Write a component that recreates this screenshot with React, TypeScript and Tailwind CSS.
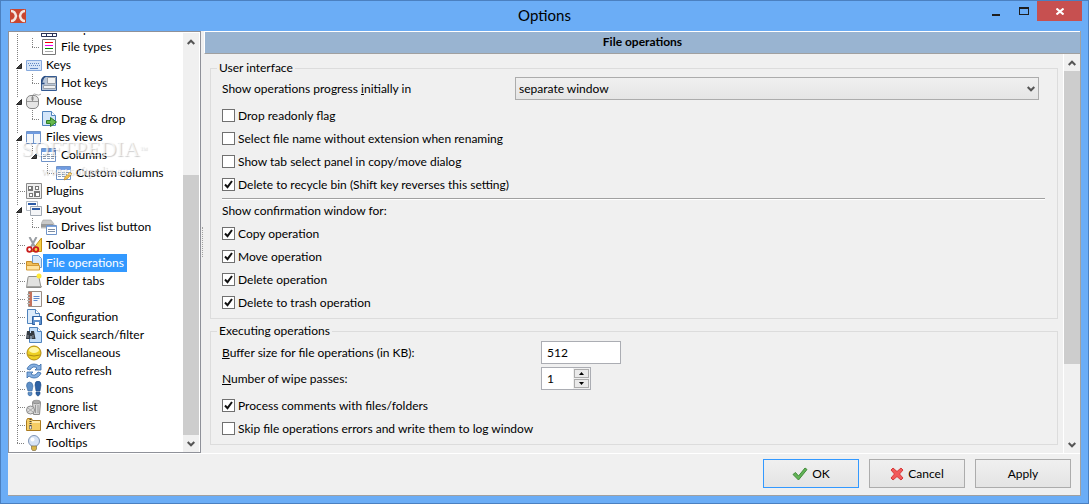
import React from 'react';

type TreeNode = {
  label: string;
  level: number;
  icon: React.ReactNode;
  open?: boolean;
  selected?: boolean;
};

const table = (
  <>
    <path d="M.5 1.5h14v13H.5z" fill="#fff" stroke="#6f93c8" />
    <path d="M1 2h13v3H1z" fill="#6f9be0" />
    <path d="M2 7.5h3M6 7.5h3M10 7.5h3M2 9.5h3M6 9.5h3M10 9.5h3M2 11.5h3M6 11.5h3M10 11.5h3" stroke="#8c9db5" />
  </>
);

const TREE: TreeNode[] = [
  {
    label: 'File panel', level: 1,
    icon: <><path d="M.5 3.5h15v12H.5z" fill="#fff" stroke="#2b3357" /><path d="M1 12.5h14M5.5 12v3M11.5 12v3" stroke="#2b3357" /></>,
  },
  {
    label: 'File types', level: 1,
    icon: <><path d="M1.5.5h13v15h-13z" fill="#fff" stroke="#777" /><path d="M4 3.5h8" stroke="#e00" /><path d="M4 6.5h8" stroke="#e0e" /><path d="M4 9.5h8" stroke="#080" /><path d="M4 12.5h8" stroke="#aaa" /></>,
  },
  {
    label: 'Keys', level: 0, open: true,
    icon: <><path d="M.5 3.5h15v10H.5z" fill="#d6e5f8" stroke="#86a9dc" /><path d="M2 6.5h12M3 8.5h11" stroke="#6088c4" strokeDasharray="1 1" /><path d="M4 11.5h8" stroke="#6088c4" /></>,
  },
  {
    label: 'Hot keys', level: 1,
    icon: <><path d="M3.5 1.5h12v14H.5V8z" fill="#b9c6d8" stroke="#345a92" /><path d="M6.5 2.5h8v6h-8z" fill="#f1f2f3" stroke="#9aa1aa" /><path d="M2.5 10.5h12v3h-12z" fill="#f1f2f3" stroke="#9aa1aa" /><path d="M.5 7q.5-5 4-5.5M.5 4.5v4h3" stroke="#294b80" strokeWidth="1.5" /></>,
  },
  {
    label: 'Mouse', level: 0, open: true,
    icon: <><path d="M7 3Q7 0 10 1.500T15 1" stroke="#aaa" /><rect x=".5" y="2.5" width="12" height="13" rx="4.5" fill="#e5e5e5" stroke="#868686" /><path d="M1 8.5h11M6.5 3v5" stroke="#999" /><rect x="5.5" y="3.5" width="2" height="4" rx="1" fill="#888" /></>,
  },
  {
    label: 'Drag & drop', level: 1,
    icon: <><path d="M1.5.5h9l4 4v10h-13z" fill="#d3e6fa" stroke="#4f83bd" /><path d="M10.5.5v4h4" fill="#fff" stroke="#4f83bd" /><path d="M5.5 9.5h4v-3l6 4.5-6 4.5v-3h-4z" fill="#67b94b" stroke="#2f7d27" /></>,
  },
  {
    label: 'Files views', level: 0, open: true,
    icon: <><path d="M.5 2.5h14v12H.5z" fill="#f3f6fa" stroke="#6f93c8" /><path d="M1 3h13v2H1z" fill="#6f9be0" /><path d="M7.5 5v9" stroke="#6f93c8" /></>,
  },
  { label: 'Columns', level: 1, open: true, icon: table },
  {
    label: 'Custom columns', level: 2,
    icon: <>{table}<path d="M8 15l1-3 5-5 2 2-5 5z" fill="#f2c14e" stroke="#b98224" strokeWidth=".6" /></>,
  },
  {
    label: 'Plugins', level: 0,
    icon: <><path d="M.5.5h15v15H.5z" fill="#eee" stroke="#8a8a8a" /><path d="M2 3h5v5H2zM9 3h4v4H9zM3 10h4v4H3zM8 8h6v6H8z" fill="#777" /><path d="M3 4h2v2H3zM10 4h2v2h-2zM4 11h2v2H4zM10 10h3v3h-3z" fill="#fff" /></>,
  },
  {
    label: 'Layout', level: 0, open: true,
    icon: <><path d="M.5.5h11v9H.5z" fill="#fff" stroke="#b5bcc5" /><path d="M2 2h8v2H2z" fill="#2c5ba6" /><path d="M4.5 5.5h11v9h-11z" fill="#f4f5f7" stroke="#a0a8b2" /><path d="M6 7h8v2H6z" fill="#2c5ba6" /></>,
  },
  {
    label: 'Drives list button', level: 1,
    icon: <><path d="M2 1h8l3 4v4H0V5z" fill="#c9c9c9" stroke="#a2a2a2" strokeWidth=".6" /><path d="M0 5h12v3H0z" fill="#999" /><path d="M5.5 6.5h10v9h-10z" fill="#fff" stroke="#6f93c8" /><path d="M6 7h9v1H6z" fill="#7fa4dc" /><path d="M7 10.5h7M7 12.5h7" stroke="#7c8da5" /></>,
  },
  {
    label: 'Toolbar', level: 0,
    icon: <><path d="M15.5 1v13.500H5z" fill="#f7cf46" stroke="#c79312" /><path d="M3.5 0l6 11M10.5 0l-6 11" stroke="#9a9ea3" strokeWidth="2" /><circle cx="3.5" cy="12.5" r="2.3" stroke="#c81e1e" strokeWidth="1.8" /><circle cx="10" cy="12.5" r="2.3" stroke="#c81e1e" strokeWidth="1.8" /></>,
  },
  {
    label: 'File operations', level: 0, selected: true,
    icon: <><path d="M6.5.5h6l3 3v9h-9z" fill="#d7e8fa" stroke="#6c9bd0" /><path d="M.5 14.5v-8h5l1 2h6v6z" fill="#f2bf58" stroke="#c58b28" /><path d="M.5 15v-4.500h13V15z" fill="#ffe3a0" stroke="#d39b38" /></>,
  },
  {
    label: 'Folder tabs', level: 0,
    icon: <><path d="M.5 14.5l1.5-10q0-1 1-1h8q1 0 2 1l2 10z" fill="#e2e2e0" stroke="#8f8f8c" /><path d="M0 13.5h16" stroke="#a5a5a2" /><circle cx="13" cy="3" r="2.5" fill="#ffe837" /></>,
  },
  {
    label: 'Log', level: 0,
    icon: <><path d="M2.5.5h13v15h-13z" fill="#f7f9fc" stroke="#9a8d83" /><path d="M3 1h3v14H3z" fill="#c5715b" /><path d="M1 3.5h3M1 6.5h3M1 9.5h3M1 12.5h3" stroke="#bbb" /><path d="M7.5 5.5h6M7.5 7.5h6M7.5 9.5h4" stroke="#5c88cc" /></>,
  },
  {
    label: 'Configuration', level: 0,
    icon: <><path d="M1.5.5h8l4 4v10h-12z" fill="#dcebfa" stroke="#4f83bd" /><path d="M9.5.5v4h4" fill="#fff" stroke="#4f83bd" /><path d="M6.5 7.5h9v8h-9z" fill="#5f91cd" stroke="#2f62a3" /><path d="M8 8h6v3H8zM9 13h4v3H9z" fill="#fff" /></>,
  },
  {
    label: 'Quick search/filter', level: 0,
    icon: <><path d="M3.5.5h8l4 4v11h-12z" fill="#c3defa" stroke="#4f83bd" /><path d="M11.5.5v4h4" fill="#fff" stroke="#4f83bd" /><path d="M1 4h3v2h1V4h3l1.5 8h-4V9h-1v3H0z" fill="#353b43" /><path d="M2 8v3M7 8v3" stroke="#8d969f" /></>,
  },
  {
    label: 'Miscellaneous', level: 0,
    icon: <><circle cx="8" cy="8" r="7" fill="#edcf24" stroke="#b18a0e" /><ellipse cx="8" cy="5" rx="5" ry="3" fill="#fff7a6" /><path d="M2 10q6 2 12 0" stroke="#ad8b13" /></>,
  },
  {
    label: 'Auto refresh', level: 0,
    icon: <><path d="M1 6q2-5 7-5 3 0 5 2l2-2v6H9l2-2q-4-3-7 2z" fill="#85afe0" stroke="#366ba8" strokeWidth=".8" /><path d="M15 10q-2 5-7 5-3 0-5-2l-2 2V9h6l-2 2q4 3 7-2z" fill="#85afe0" stroke="#366ba8" strokeWidth=".8" /></>,
  },
  {
    label: 'Icons', level: 0,
    icon: <><path d="M.5 5q0-4 3-4T7 5l-1 5H2zM2 11.5h4v2q-2 3-4 0z" fill="#5e8fc6" stroke="#38689f" strokeWidth=".6" /><path d="M9 4q0-4 3-4t3 4l-1 6h-4zM10 11h4v2q-2 4-4 0z" fill="#2e62a4" stroke="#204b83" strokeWidth=".6" /></>,
  },
  {
    label: 'Ignore list', level: 0,
    icon: <><path d="M6.5 3.5h8l-1 12h-6z" fill="#d7d7d7" stroke="#8b8b8b" /><ellipse cx="10.5" cy="3" rx="4" ry="1.8" fill="#aaa" stroke="#777" strokeWidth=".6" /><path d="M9.5 6v8M12 6v8" stroke="#999" /><circle cx="4.5" cy="11" r="4" fill="#ddd" stroke="#8a8a8a" /><path d="M2 9l5 4M2 13l5-4" stroke="#aaa" /></>,
  },
  {
    label: 'Archivers', level: 0,
    icon: <><path d="M.5 13.5v-10l1-2h4l1 2h8v10z" fill="#f5cd65" stroke="#aa7b20" /><path d="M6 4h8v2H6z" fill="#ffe9a6" /><path d="M4.5 2v7" stroke="#444" strokeWidth="2" strokeDasharray="1 1" /><path d="M3.5 9h2v3h-2z" fill="#eee" stroke="#555" strokeWidth=".6" /></>,
  },
  {
    label: 'Tooltips', level: 0,
    icon: <><circle cx="8" cy="6" r="5.5" fill="#d6e3f6" stroke="#7d93b4" /><circle cx="6.5" cy="4.5" r="2" fill="#fff" /><path d="M5.5 11h5v3l-1 1.500h-3l-1-1.500z" fill="#d9b64b" stroke="#84734a" strokeWidth=".7" /></>,
  },
];

const Branch = ({ kind }: { kind: 'line' | 'leaf' | 'last' | 'open' | 'openEnd' | 'none' }) => (
  <svg width="15" height="18" className="shrink-0" fill="none" stroke="#808080" strokeDasharray="1 1" shapeRendering="crispEdges" aria-hidden="true">
    {kind === 'line' && <path d="M7.5 0v18" />}
    {kind === 'leaf' && <path d="M7.5 0v18M8 9.5h7" />}
    {kind === 'last' && <path d="M7.5 0v9M7 9.5h8" />}
    {kind === 'open' && <path d="M7.5 0v6M7.5 14v4" />}
    {kind === 'openEnd' && <path d="M7.5 0v6" />}
    {(kind === 'open' || kind === 'openEnd') && (
      <path d="M11.5 7.5v5h-5z" fill="#404040" stroke="#262626" strokeDasharray="none" shapeRendering="auto" />
    )}
  </svg>
);

const TreeRow = ({ node, isLast }: { node: TreeNode; isLast: boolean }) => {
  const own = node.open ? (node.level ? 'openEnd' : 'open') : node.level || isLast ? 'last' : 'leaf';
  return (
    <li className="flex h-[18px] shrink-0 items-center whitespace-nowrap">
      {node.level > 0 && <Branch kind="line" />}
      {node.level > 1 && <Branch kind="none" />}
      <Branch kind={own} />
      <svg width="16" height="16" viewBox="0 0 16 16" className="ml-px shrink-0" fill="none" aria-hidden="true">
        {node.icon}
      </svg>
      <span className={node.selected ? 'ml-px bg-[#3399ff] px-[3px] leading-[18px] text-white' : 'ml-px px-[3px] leading-[18px]'}>
        {node.label}
      </span>
    </li>
  );
};

const Chevron = ({ up }: { up?: boolean }) => (
  <svg width="8" height="6" viewBox="0 0 8 6" fill="none" stroke="#555" strokeWidth="2" aria-hidden="true">
    <path d={up ? 'M.7 5L4 1.7 7.3 5' : 'M.7 1L4 4.3 7.3 1'} />
  </svg>
);

const ScrollBar = ({ children }: { children: React.ReactNode }) => (
  <div className="flex w-4 shrink-0 flex-col bg-[#f0f0f0]">
    <button type="button" aria-label="Scroll up" className="flex h-[17px] shrink-0 items-center justify-center">
      <Chevron up />
    </button>
    <div className="flex min-h-0 flex-1 flex-col">{children}</div>
    <button type="button" aria-label="Scroll down" className="flex h-[17px] shrink-0 items-center justify-center">
      <Chevron />
    </button>
  </div>
);

const Check = ({ label, checked }: { label: string; checked?: boolean }) => (
  <label className="flex h-[23px] items-center gap-[3px]">
    <span className="grid">
      <input
        type="checkbox"
        defaultChecked={checked}
        className="peer col-start-1 row-start-1 size-[13px] appearance-none border border-[#707070] bg-white"
      />
      <svg viewBox="0 0 13 13" className="pointer-events-none invisible col-start-1 row-start-1 size-[13px] peer-checked:visible" fill="none" stroke="#111" strokeWidth="2" aria-hidden="true">
        <path d="M3 6.5l2.5 2.7L10 3" />
      </svg>
    </span>
    {label}
  </label>
);

const Group = ({ title, children }: { title: string; children: React.ReactNode }) => (
  <fieldset className="min-w-0 border border-[#dcdcdc] pr-3 pb-1 pl-[11px]">
    <legend className="-ml-[5px] px-[2px] leading-[18px]">{title}</legend>
    {children}
  </fieldset>
);

const DialogButton = ({ primary, children }: { primary?: boolean; children: React.ReactNode }) => (
  <button
    type="button"
    className={`flex h-[29px] w-24 items-center justify-center gap-1 border bg-linear-to-b from-[#f0f0f0] to-[#e4e4e4] ${primary ? 'border-[#3399ff]' : 'border-[#acacac]'}`}
  >
    {children}
  </button>
);

export default function App() {
  return (
    <div className="relative flex h-screen flex-col border border-[#4b80c0] bg-[#6badf6] px-[7px] pb-[7px] font-['Lato',sans-serif] text-[12px] text-black">
      <header className="grid h-[30px] shrink-0 grid-cols-[1fr_auto_1fr]">
        <div className="flex items-center pl-[2px]">
          <svg width="16" height="14" viewBox="0 0 16 14" aria-hidden="true">
            <rect width="16" height="14" rx="1" fill="#c9452f" />
            <path d="M1 2q4 0 5 5-1 5-5 5M15 2q-4 0-5 5 1 5 5 5" fill="none" stroke="#f4e6e0" strokeWidth="2.5" />
          </svg>
        </div>
        <h1 className="text-[15px] leading-[28px]">Options</h1>
        <div className="flex h-5 justify-end">
          <button type="button" aria-label="Minimize" className="flex w-7 items-center justify-center">
            <svg width="8" height="12" aria-hidden="true"><path d="M0 9h8v2H0z" fill="#1e1e1e" /></svg>
          </button>
          <button type="button" aria-label="Maximize" className="flex w-[27px] items-center justify-center">
            <svg width="10" height="8" aria-hidden="true"><path d="M0 0h10v8H0zM1 2v5h8V2z" fill="#1e1e1e" fillRule="evenodd" /></svg>
          </button>
          <button type="button" aria-label="Close" className="mr-[-1px] flex w-[45px] items-center justify-center bg-[#c75050]">
            <svg width="8" height="7" aria-hidden="true"><path d="M.5.5l7 6M7.5.5l-7 6" stroke="#fff" strokeWidth="2" /></svg>
          </button>
        </div>
      </header>

      <main className="flex min-h-0 flex-1 flex-col border-r border-b border-[#a0a0a0] bg-[#f0f0f0]">
        <div className="flex min-h-0 flex-1">
          <nav aria-label="Option pages" className="relative flex w-[193px] shrink-0 border border-[#8f9199] bg-white pt-px pr-px">
            <ul className="flex min-w-0 flex-1 flex-col justify-end overflow-hidden pl-px">
              {TREE.map((node, i) => (
                <TreeRow key={node.label} node={node} isLast={i === TREE.length - 1} />
              ))}
            </ul>
            <ScrollBar>
              <div className="flex-[125]" />
              <div className="flex-[259] bg-[#cdcdcd]" />
            </ScrollBar>
            <div aria-hidden="true" className="pointer-events-none absolute top-[105px] left-3 font-['Liberation_Serif',serif] text-white/70 [text-shadow:1px_1px_1px_#0003]">
              <p className="text-[22px] leading-6">SOFTPEDIA<sup className="text-[8px]">™</sup></p>
              <p className="pl-5 text-[12px] leading-5">www.softpedia.com</p>
            </div>
          </nav>

          <div className="flex w-[3px] shrink-0 items-center justify-center">
            <div className="h-[30px] border-l border-dotted border-[#a0a0a0]" />
          </div>

          <section className="flex min-w-0 flex-1 flex-col">
            <h2 className="h-[23px] shrink-0 border-t border-b border-l border-t-white border-b-[#a0a0a0] border-l-white bg-[#99b4d1] text-center leading-[20px] font-bold">
              File operations
            </h2>
            <div className="flex min-h-0 flex-1">
              <form className="flex min-w-0 flex-1 flex-col gap-[3px] overflow-hidden pt-[5px] pr-[5px] pl-[6px]">
                <Group title="User interface">
                  <div className="mr-[6px] mb-1 flex items-center">
                    <label htmlFor="progress" className="w-[293px] shrink-0">
                      Show operations progress <u>i</u>nitially in
                    </label>
                    <div className="grid min-w-0 flex-1 items-center">
                      <select id="progress" className="col-start-1 row-start-1 h-[23px] w-full appearance-none border border-[#acacac] bg-linear-to-b from-[#f0f0f0] to-[#e5e5e5] px-[3px]">
                        <option>separate window</option>
                      </select>
                      <span className="pointer-events-none col-start-1 row-start-1 mr-1 justify-self-end">
                        <Chevron />
                      </span>
                    </div>
                  </div>
                  <Check label="Drop readonly flag" />
                  <Check label="Select file name without extension when renaming" />
                  <Check label="Show tab select panel in copy/move dialog" />
                  <Check label="Delete to recycle bin (Shift key reverses this setting)" checked />
                  <hr className="mt-[2px] border-t border-b border-t-[#a0a0a0] border-b-white" />
                  <p className="leading-[22px]">Show confirmation window for:</p>
                  <Check label="Copy operation" checked />
                  <Check label="Move operation" checked />
                  <Check label="Delete operation" checked />
                  <Check label="Delete to trash operation" checked />
                </Group>

                <Group title="Executing operations">
                  <div className="mt-px flex items-center">
                    <label htmlFor="buffer" className="w-[319px] shrink-0">
                      <u>B</u>uffer size for file operations (in KB):
                    </label>
                    <input id="buffer" defaultValue="512" className="h-[23px] w-20 border border-[#abadb3] bg-white px-[5px]" />
                  </div>
                  <div className="mt-[3px] mb-1 flex items-center">
                    <label htmlFor="passes" className="w-[319px] shrink-0">
                      <u>N</u>umber of wipe passes:
                    </label>
                    <div className="flex h-[23px] w-[50px] border border-[#abadb3] bg-white">
                      <input id="passes" defaultValue="1" className="min-w-0 flex-1 px-[5px]" />
                      <div className="flex w-[17px] flex-col gap-px bg-[#f0f0f0] p-px">
                        <button type="button" aria-label="More passes" className="flex flex-1 items-center justify-center border border-[#acacac] bg-[#eaeaea]">
                          <svg width="5" height="3" aria-hidden="true"><path d="M0 3l2.5-3L5 3z" /></svg>
                        </button>
                        <button type="button" aria-label="Fewer passes" className="flex flex-1 items-center justify-center border border-[#acacac] bg-[#eaeaea]">
                          <svg width="5" height="3" aria-hidden="true"><path d="M0 0l2.5 3L5 0z" /></svg>
                        </button>
                      </div>
                    </div>
                  </div>
                  <Check label="Process comments with files/folders" checked />
                  <Check label="Skip file operations errors and write them to log window" />
                </Group>
              </form>
              <div className="flex border-l border-white">
                <ScrollBar>
                  <div className="flex-[293] bg-[#cdcdcd]" />
                  <div className="flex-[72]" />
                </ScrollBar>
              </div>
            </div>
          </section>
        </div>

        <footer className="flex shrink-0 justify-end gap-[10px] border-t border-white pt-[5px] pb-[7px] pr-[9px]">
          <DialogButton primary>
            <svg width="16" height="14" viewBox="0 0 16 14" aria-hidden="true">
              <path d="M1 7.5l2.5-2L6.5 9 13 1l2 1.500L6.500 13z" fill="#62b356" stroke="#438c3b" />
            </svg>
            OK
          </DialogButton>
          <DialogButton>
            <svg width="14" height="14" viewBox="0 0 14 14" aria-hidden="true">
              <path d="M1 3l2-2 4 3.5L11 1l2 2-3.500 4 3.500 4-2 2-4-3.500L3 13l-2-2 3.500-4z" fill="#f25a5a" stroke="#d63a3a" />
            </svg>
            Cancel
          </DialogButton>
          <DialogButton>Apply</DialogButton>
        </footer>
      </main>
    </div>
  );
}
